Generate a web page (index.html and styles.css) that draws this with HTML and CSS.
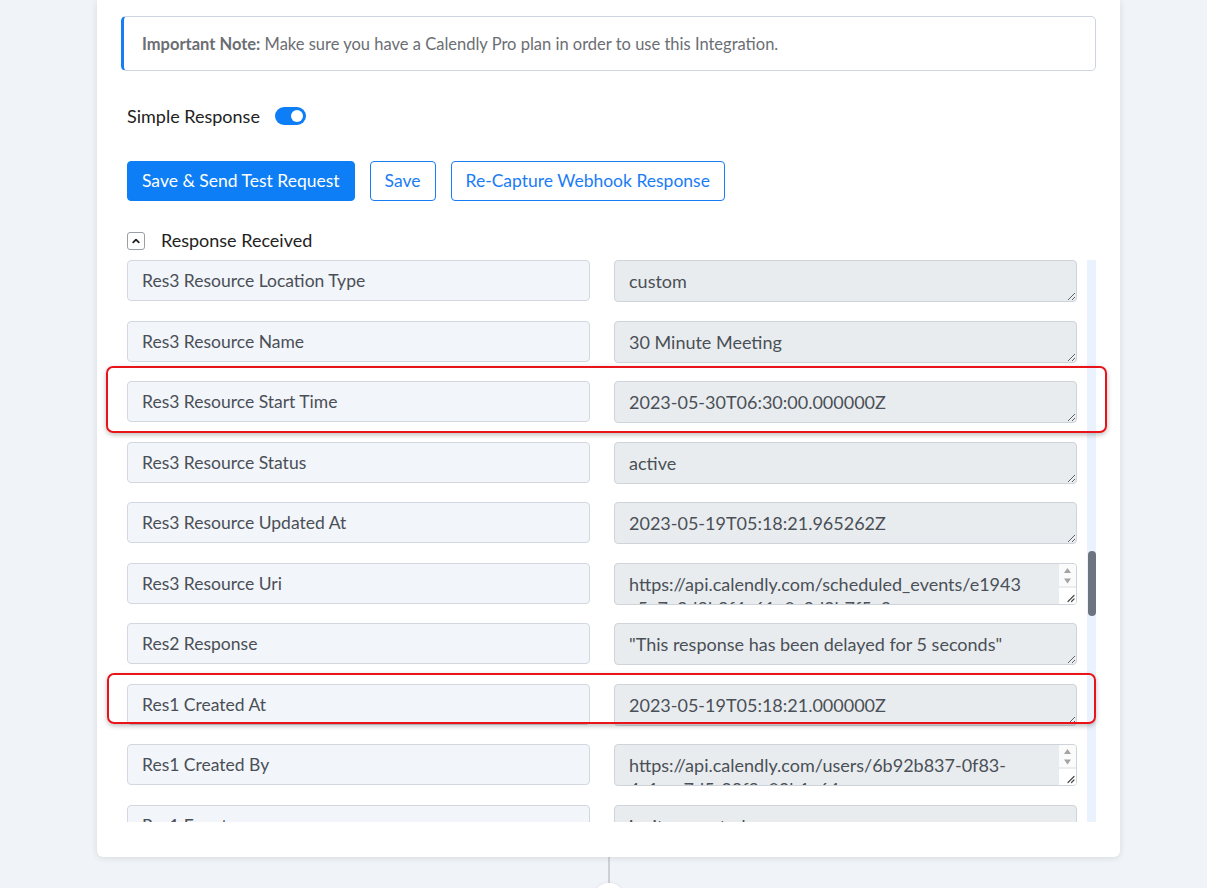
FILE: index.html
```html
<!DOCTYPE html>
<html lang="en">
<head>
  <meta charset="UTF-8" />
  <title>Calendly Trigger</title>
  <meta name="viewport" content="width=device-width,initial-scale=1" />
  <link rel="stylesheet" href="styles.css">
</head>
<body>

<div class="card">
  <div class="note"><b>Important Note:</b> Make sure you have a Calendly Pro plan in order to use this Integration.</div>

  <div class="inner">
    <div class="simple">
      <span>Simple Response</span>
      <span class="switch"><span class="knob"></span></span>
    </div>

    <div class="actions">
      <button class="btn btn-primary">Save &amp; Send Test Request</button>
      <button class="btn btn-outline">Save</button>
      <button class="btn btn-outline">Re-Capture Webhook Response</button>
    </div>

    <div class="received">
      <span class="chev">
        <svg width="10" height="10" viewBox="0 0 10 10"><path d="M2.2 6.4 L5 3.6 L7.8 6.4" fill="none" stroke="#222" stroke-width="1.8" stroke-linecap="round" stroke-linejoin="round"/></svg>
      </span>
      <span class="received-label">Response Received</span>
    </div>

    <div class="resp">
      <div class="list">
        <div class="row"><div class="key">Res3 Resource Location Type</div><div class="valbox"><textarea class="val" readonly>custom</textarea></div></div>
        <div class="row"><div class="key">Res3 Resource Name</div><div class="valbox"><textarea class="val" readonly>30 Minute Meeting</textarea></div></div>
        <div class="row"><div class="key">Res3 Resource Start Time</div><div class="valbox"><textarea class="val" readonly>2023-05-30T06:30:00.000000Z</textarea></div></div>
        <div class="row"><div class="key">Res3 Resource Status</div><div class="valbox"><textarea class="val" readonly>active</textarea></div></div>
        <div class="row"><div class="key">Res3 Resource Updated At</div><div class="valbox"><textarea class="val" readonly>2023-05-19T05:18:21.965262Z</textarea></div></div>
        <div class="row"><div class="key">Res3 Resource Uri</div>
          <div class="valbox">
            <textarea class="val long" readonly>https://api.calendly.com/scheduled_events/e1943&#8203;c5e7a2d9b8f4a61e0c3d2b7f5a9</textarea>
            <svg class="sbar" width="17" height="40" viewBox="0 0 17 40">
              <rect width="17" height="40" fill="#fbfbfb"/>
              <path d="M8.5 4 L12 9 L5 9 Z" fill="#a3a3a3"/>
              <path d="M5 14.5 L12 14.5 L8.5 19.5 Z" fill="#a3a3a3"/>
              <rect y="23" width="17" height="17" fill="#fff"/>
              <line x1="0" y1="23" x2="17" y2="23" stroke="#dcdcdc"/>
              <path d="M9 37.5 L15 31.5 M12.5 37.5 L15 35" stroke="#4a4a4a" stroke-width="1.2" stroke-linecap="round"/>
            </svg>
          </div>
        </div>
        <div class="row"><div class="key">Res2 Response</div><div class="valbox"><textarea class="val" readonly>"This response has been delayed for 5 seconds"</textarea></div></div>
        <div class="row"><div class="key">Res1 Created At</div><div class="valbox"><textarea class="val" readonly>2023-05-19T05:18:21.000000Z</textarea></div></div>
        <div class="row"><div class="key">Res1 Created By</div>
          <div class="valbox">
            <textarea class="val long" readonly>https://api.calendly.com/users/6b92b837-0f83-4c1e-a7d5-28f9e03b1c64</textarea>
            <svg class="sbar" width="17" height="40" viewBox="0 0 17 40">
              <rect width="17" height="40" fill="#fbfbfb"/>
              <path d="M8.5 4 L12 9 L5 9 Z" fill="#a3a3a3"/>
              <path d="M5 14.5 L12 14.5 L8.5 19.5 Z" fill="#a3a3a3"/>
              <rect y="23" width="17" height="17" fill="#fff"/>
              <line x1="0" y1="23" x2="17" y2="23" stroke="#dcdcdc"/>
              <path d="M9 37.5 L15 31.5 M12.5 37.5 L15 35" stroke="#4a4a4a" stroke-width="1.2" stroke-linecap="round"/>
            </svg>
          </div>
        </div>
        <div class="row"><div class="key">Res1 Event</div><div class="valbox"><textarea class="val" readonly>invitee.created</textarea></div></div>
      </div>
      <div class="track"><div class="thumb"></div></div>
    </div>
  </div>

  <!-- annotation boxes -->
  <div class="mark mark-1"></div>
  <div class="mark mark-2"></div>
</div>

<div class="connector">
  <div class="line"></div>
  <div class="dot"></div>
</div>

</body>
</html>
```

FILE: styles.css
```css
body {
  margin:0; background:#f0f3f7; height:888px; overflow:hidden;
  font-family: Lato, "Open Sans", sans-serif; color:#222;
}

.card {
  position:relative;
  width:1023px; margin-left:97px; box-sizing:border-box;
  background:#fff; border-radius:0 0 6px 6px;
  box-shadow:0 1px 6px rgba(30,40,60,0.12);
  padding:16px 24px 35px;
}

/* NOTE */
.note {
  height:55px; box-sizing:border-box;
  border:1px solid #cfd5e0; border-left:3px solid #1a7cf5; border-radius:5px;
  padding:0 18px; line-height:54px;
  font-size:16.5px; color:#6b6e73;
}
.note b { color:#6b6e73; }

.inner { padding-left:6px; }

/* SIMPLE RESPONSE TOGGLE */
.simple {
  margin-top:36px; height:18px;
  display:flex; align-items:center; gap:15px;
  font-size:18px; color:#222;
}
.switch {
  width:31px; height:18px; border-radius:9px; background:#0d7ef5;
  display:flex; align-items:center; justify-content:flex-end;
  padding-right:3px; box-sizing:border-box;
}
.knob { width:12px; height:12px; border-radius:50%; background:#fff; }

/* BUTTONS */
.actions { margin-top:36px; display:flex; gap:15px; }
.btn {
  height:40px; padding:0 14px 2px; border-radius:4px;
  font-family:inherit; font-size:17.5px; cursor:pointer;
}
.btn-primary { background:#0d7ef5; border:1px solid #0d7ef5; color:#fff; }
.btn-outline { background:#fff; border:1px solid #1a7cf5; color:#1a7cf5; }

/* RESPONSE RECEIVED */
.received {
  margin-top:31px; height:18px;
  display:flex; align-items:center; gap:16px;
  font-size:18px; color:#222;
}
.received-label { margin-top:-3px; }
.chev {
  width:18px; height:18px; box-sizing:border-box;
  border:1px solid #9a9fa6; border-radius:3px;
  display:flex; align-items:center; justify-content:center;
}

/* RESPONSE LIST */
.resp { margin-top:10px; display:flex; height:562px; }
.list {
  flex:1; overflow:hidden; padding-right:10px;
  display:flex; flex-direction:column; gap:18.5px;
}
.row {
  display:grid; grid-template-columns:463px 463px; gap:24px;
  flex-shrink:0;
}
.key {
  height:41px; box-sizing:border-box;
  background:#f2f5f9; border:1px solid #d3d8e0; border-radius:4px;
  padding-left:14px; line-height:39px;
  font-size:17.5px; color:#4a4f57;
}
.valbox { position:relative; height:42px; }
.val {
  display:block; width:100%;
  height:42px; box-sizing:border-box; margin:0;
  background:#e9ecef; border:1px solid #ced4da; border-radius:4px;
  padding:8px 14px; line-height:24px;
  font-family:inherit; font-size:18px; color:#495057;
  outline:none; overflow:hidden;
}
.val.long { padding-right:31px; }
/* fake native textarea scrollbar + resize grip */
.sbar { position:absolute; top:1px; right:1px; border-radius:0 3px 3px 0; }

.track { width:9px; background:#eaf3fd; }
.thumb {
  width:8px; height:65px; margin-top:291px; margin-left:1px;
  background:#6c7480; border-radius:4px;
}

/* ANNOTATIONS */
.mark {
  position:absolute;
  border:2px solid #e8141a; border-radius:7px;
  box-shadow:0 2px 5px rgba(0,0,0,0.25);
}
.mark-1 { left:9px; top:366px; width:997px; height:63px; }
.mark-2 { left:10px; top:673px; width:985px; height:47px; }

/* CONNECTOR BELOW CARD */
.connector {
  width:1023px; margin-left:97px;
  display:flex; flex-direction:column; align-items:center;
}
.line { width:2px; height:26px; background:#cdd1d6; }
.dot {
  width:32px; height:32px; border-radius:50%; background:#fff;
  box-shadow:0 0 4px rgba(0,0,0,0.08);
}
```
